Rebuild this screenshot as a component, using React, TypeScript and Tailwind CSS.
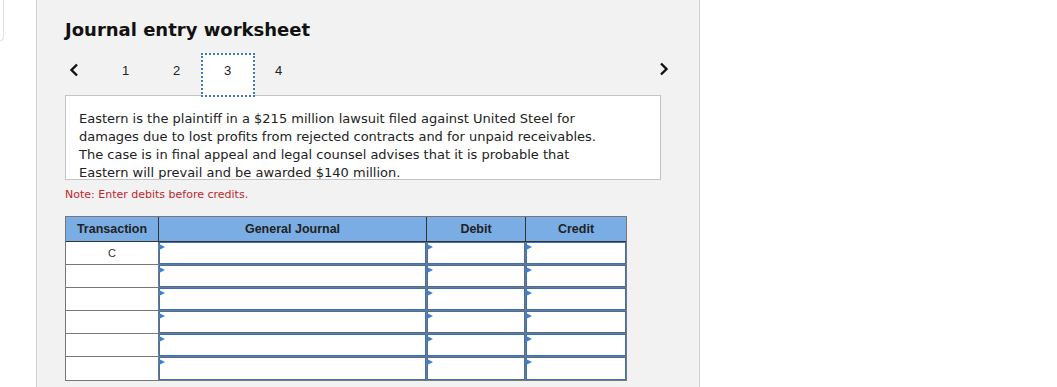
import React from "react";

const body = '"DejaVu Sans", "Liberation Sans", sans-serif';

function Chevron({ dir }: { dir: "left" | "right" }) {
	return (
		<svg width="10" height="14" viewBox="0 0 10 14" className="block">
			<polyline
				points={dir === "left" ? "8,1.5 2.5,7 8,12.5" : "2,1.5 7.5,7 2,12.5"}
				fill="none"
				stroke="#111"
				strokeWidth="2.4"
			/>
		</svg>
	);
}

function InputCell({ w }: { w: string }) {
	return (
		<div className={`${w} h-full border-r border-[#777] last:border-r-0`}>
			<div className="relative h-full border border-[#3d70b5] bg-white">
				<span className="absolute -left-px top-px h-0 w-0 border-y-[3px] border-l-[6px] border-y-transparent border-l-[#3b7fd8]" />
			</div>
		</div>
	);
}

export default function App() {
	const rows = ["C", "", "", "", "", ""];
	return (
		<div className="flex h-screen overflow-hidden bg-white" style={{ fontFamily: body }}>
			<div className="w-[36px] shrink-0">
				<div className="h-[41px] w-[4px] rounded-br-[4px] border-b border-r border-[#e2e2e2]" />
			</div>
			<div className="w-[664px] shrink-0 border-x border-[#cfcfcf] bg-[#f2f2f2] pl-[28px]">
				<h1 className="pt-[20px] text-[18px] font-bold leading-[20px] text-[#111]">
					Journal entry worksheet
				</h1>

				<div className="mt-[13px] flex h-[42px] w-[604px] items-start">
					<div className="w-[35px] pl-[4px] pt-[10px]">
						<Chevron dir="left" />
					</div>
					{["1", "2", "3", "4"].map((n) =>
						n === "3" ? (
							<div
								key={n}
								className="relative z-10 -mx-[1.5px] h-[44px] w-[54px] border-2 border-dotted border-[#3e77c4] bg-white pt-[8px] text-center text-[13px] leading-[16px] text-[#222]"
								style={{ fontFamily: '"Liberation Sans", sans-serif' }}
							>
								{n}
							</div>
						) : (
							<div
								key={n}
								className="h-[44px] w-[51px] pt-[10px] text-center text-[13px] leading-[16px] text-[#222]"
								style={{ fontFamily: '"Liberation Sans", sans-serif' }}
							>
								{n}
							</div>
						)
					)}
					<div className="ml-auto pt-[9px]">
						<Chevron dir="right" />
					</div>
				</div>

				<div className="h-[85px] w-[596px] overflow-hidden border border-[#c4c4c4] bg-white pl-[13px] pt-[14px] text-[13px] leading-[18px] text-[#222]">
					Eastern is the plaintiff in a $215 million lawsuit filed against United Steel for
					<br />
					damages due to lost profits from rejected contracts and for unpaid receivables.
					<br />
					The case is in final appeal and legal counsel advises that it is probable that
					<br />
					Eastern will prevail and be awarded $140 million.
				</div>

				<p className="mt-[7px] text-[11px] leading-[16px] text-[#c0262c]">
					Note: Enter debits before credits.
				</p>

				<div
					className="mt-[13px] w-[562px] border border-[#777] bg-white"
					style={{ fontFamily: '"Liberation Sans", sans-serif' }}
				>
					<div className="flex h-[25px] border-b border-[#333] bg-[#79ade4] text-[12.5px] font-bold text-[#222]">
						<div className="flex w-[93px] items-center justify-center border-r border-[#333]">Transaction</div>
						<div className="flex w-[268px] items-center justify-center border-r border-[#333]">General Journal</div>
						<div className="flex w-[99px] items-center justify-center border-r border-[#333]">Debit</div>
						<div className="flex flex-1 items-center justify-center">Credit</div>
					</div>
					{rows.map((t, i) => (
						<div key={i} className="flex h-[23px] border-b border-[#777] last:border-b-0">
							<div className="flex w-[93px] items-center justify-center border-r border-[#777] text-[11px] text-[#333]">
								{t}
							</div>
							<InputCell w="w-[268px]" />
							<InputCell w="w-[99px]" />
							<InputCell w="flex-1" />
						</div>
					))}
				</div>
			</div>
			<div className="flex-1" />
		</div>
	);
}
